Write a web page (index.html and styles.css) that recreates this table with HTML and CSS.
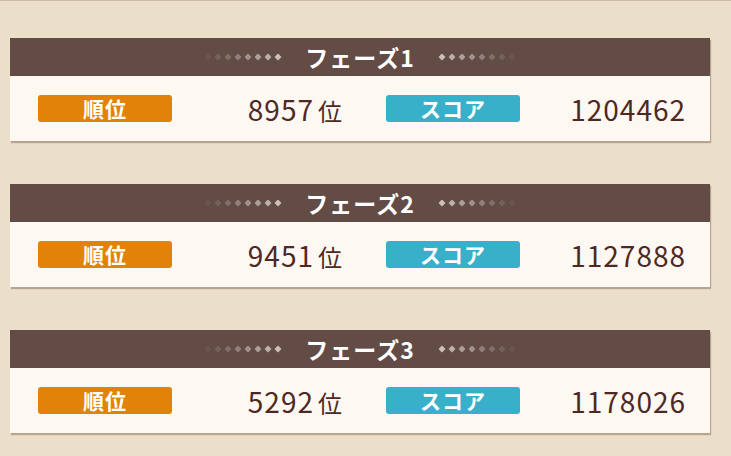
FILE: index.html
```html
<!DOCTYPE html>
<html lang="ja">
<head>
  <meta charset="UTF-8" />
  <title>フェーズ結果</title>
  <link rel="stylesheet" href="styles.css">
</head>
<body>
  <div class="page">
    <div class="phase">
      <div class="phase-head">
        <span class="dots left"><i></i><i></i><i></i><i></i><i></i><i></i><i></i><i></i></span>
        <h2>フェーズ1</h2>
        <span class="dots right"><i></i><i></i><i></i><i></i><i></i><i></i><i></i><i></i></span>
      </div>
      <div class="phase-body">
        <span class="badge rank">順位</span>
        <span class="value rank-value">8957<small>位</small></span>
        <span class="badge score">スコア</span>
        <span class="value score-value">1204462</span>
      </div>
    </div>

    <div class="phase">
      <div class="phase-head">
        <span class="dots left"><i></i><i></i><i></i><i></i><i></i><i></i><i></i><i></i></span>
        <h2>フェーズ2</h2>
        <span class="dots right"><i></i><i></i><i></i><i></i><i></i><i></i><i></i><i></i></span>
      </div>
      <div class="phase-body">
        <span class="badge rank">順位</span>
        <span class="value rank-value">9451<small>位</small></span>
        <span class="badge score">スコア</span>
        <span class="value score-value">1127888</span>
      </div>
    </div>

    <div class="phase">
      <div class="phase-head">
        <span class="dots left"><i></i><i></i><i></i><i></i><i></i><i></i><i></i><i></i></span>
        <h2>フェーズ3</h2>
        <span class="dots right"><i></i><i></i><i></i><i></i><i></i><i></i><i></i><i></i></span>
      </div>
      <div class="phase-body">
        <span class="badge rank">順位</span>
        <span class="value rank-value">5292<small>位</small></span>
        <span class="badge score">スコア</span>
        <span class="value score-value">1178026</span>
      </div>
    </div>
  </div>
</body>
</html>
```

FILE: styles.css
```css
:root {
  font-family: 'Noto Sans CJK JP', 'Noto Sans', sans-serif;
}
html, body {
  margin: 0; padding: 0;
  width: 100%;
  height: 100%;
  overflow: hidden;
}
body {
  background: #ebdfca;
  border-top: 1px solid #c9baa6;
  box-sizing: border-box;
}
.page {
  display: flex;
  flex-direction: column;
  gap: 43px;
  padding: 37px 0 0 10px;
}
.phase {
  width: 700px;
  box-shadow: 1px 2px 1px rgba(120, 95, 75, 0.45);
}
.phase-head {
  height: 38px;
  background: #634c46;
  display: flex;
  align-items: center;
  justify-content: center;
  gap: 24px;
}
.phase-head h2 {
  margin: 0;
  color: #fff;
  font-size: 23px;
  font-weight: 700;
  letter-spacing: 1px;
  line-height: 1;
}
.dots {
  display: flex;
  gap: 4px;
}
.dots i {
  width: 6px;
  height: 6px;
  background: #cbbfbb;
  transform: rotate(45deg) scale(0.85);
  border-radius: 1px;
}
.dots.left i:nth-child(1), .dots.right i:nth-child(8) { opacity: 0.08; }
.dots.left i:nth-child(2), .dots.right i:nth-child(7) { opacity: 0.18; }
.dots.left i:nth-child(3), .dots.right i:nth-child(6) { opacity: 0.3; }
.dots.left i:nth-child(4), .dots.right i:nth-child(5) { opacity: 0.45; }
.dots.left i:nth-child(5), .dots.right i:nth-child(4) { opacity: 0.6; }
.dots.left i:nth-child(6), .dots.right i:nth-child(3) { opacity: 0.72; }
.dots.left i:nth-child(7), .dots.right i:nth-child(2) { opacity: 0.85; }
.phase-body {
  height: 65px;
  background: #fdf8f2;
  display: flex;
  align-items: center;
  padding: 0 24px 0 28px;
  box-sizing: border-box;
}
.badge {
  width: 134px;
  height: 27px;
  border-radius: 3px;
  color: #fff;
  font-size: 21px;
  font-weight: 700;
  letter-spacing: 1px;
  display: flex;
  align-items: center;
  justify-content: center;
  line-height: 1;
}
.badge.rank { background: #e38208; }
.badge.score { background: #38b0c9; margin-left: 43px; }
.value {
  color: #4f2823;
  font-size: 28px;
  font-weight: 400;
  letter-spacing: 1px;
  text-align: right;
  line-height: 1;
}
.rank-value { width: 171px; }
.score-value { width: 166px; }
.value small {
  font-size: 24px;
  margin-left: 4px;
}
```
